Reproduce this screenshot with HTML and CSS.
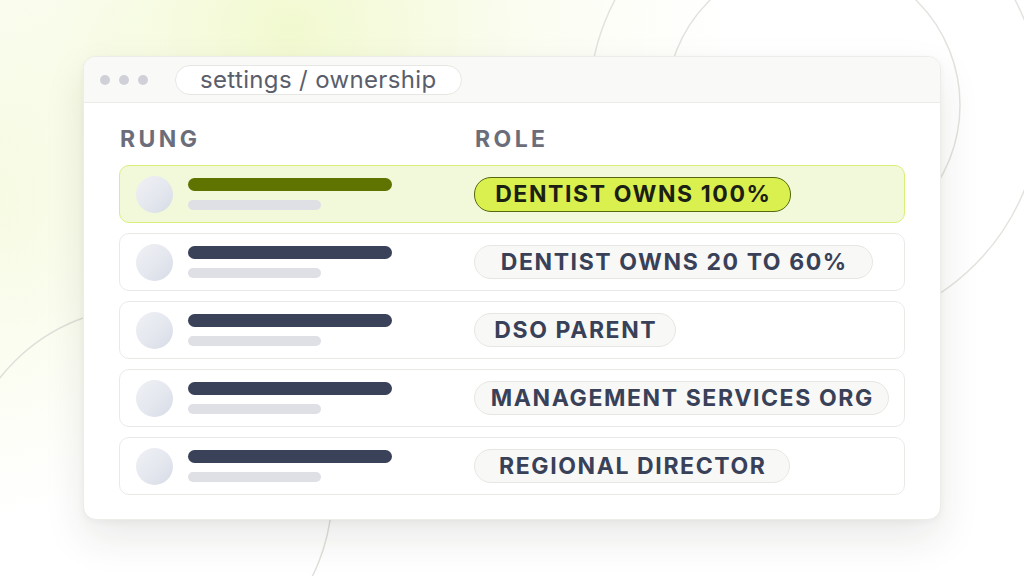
FILE: index.html
```html
<!DOCTYPE html>
<html lang="en">
<head>
<meta charset="utf-8">
<title>settings / ownership</title>
<link rel="stylesheet" href="styles.css">
</head>
<body>
<div class="stage">
  <svg class="deco" width="1024" height="576" viewBox="0 0 1024 576" aria-hidden="true">
    <circle cx="813" cy="105" r="147" fill="none" stroke="#e3e3de" stroke-width="1.5"/>
    <circle cx="815" cy="105" r="226" fill="none" stroke="#e3e3de" stroke-width="1.5"/>
    <circle cx="146" cy="493" r="186" fill="none" stroke="#e0e0da" stroke-width="1.5"/>
  </svg>
  <div class="window">
    <div class="titlebar">
      <div class="dots"><span class="dot"></span><span class="dot"></span><span class="dot"></span></div>
      <div class="address">settings / ownership</div>
    </div>
    <div class="content">
      <div class="head">
        <div class="col-label">RUNG</div>
        <div class="col-label">ROLE</div>
      </div>
      <div class="rows">
        <div class="row row-active">
          <div class="rung"><span class="avatar"></span><span class="lines"><span class="line-main"></span><span class="line-sub"></span></span></div>
          <div class="role"><span class="pill pill-active p1">DENTIST OWNS 100%</span></div>
        </div>
        <div class="row">
          <div class="rung"><span class="avatar"></span><span class="lines"><span class="line-main"></span><span class="line-sub"></span></span></div>
          <div class="role"><span class="pill p2">DENTIST OWNS 20 TO 60%</span></div>
        </div>
        <div class="row">
          <div class="rung"><span class="avatar"></span><span class="lines"><span class="line-main"></span><span class="line-sub"></span></span></div>
          <div class="role"><span class="pill p3">DSO PARENT</span></div>
        </div>
        <div class="row">
          <div class="rung"><span class="avatar"></span><span class="lines"><span class="line-main"></span><span class="line-sub"></span></span></div>
          <div class="role"><span class="pill p4">MANAGEMENT SERVICES ORG</span></div>
        </div>
        <div class="row">
          <div class="rung"><span class="avatar"></span><span class="lines"><span class="line-main"></span><span class="line-sub"></span></span></div>
          <div class="role"><span class="pill p5">REGIONAL DIRECTOR</span></div>
        </div>
      </div>
    </div>
  </div>
</div>
</body>
</html>
```

FILE: styles.css
```css
* { box-sizing: border-box; }
html, body { margin: 0; padding: 0; }
body {
  width: 1024px;
  height: 576px;
  overflow: hidden;
  font-family: Inter, "Liberation Sans", sans-serif;
  background: #ffffff;
}
.stage {
  position: relative;
  width: 1024px;
  height: 576px;
  padding: 56px 0 0 83px;
  background:
    radial-gradient(ellipse 440px 380px at 290px 30px, rgba(238, 248, 196, 0.8), rgba(245, 250, 222, 0.4) 55%, rgba(255, 255, 255, 0) 100%),
    radial-gradient(ellipse 200px 320px at 0px 200px, rgba(242, 249, 210, 0.6), rgba(255, 255, 255, 0) 100%),
    #ffffff;
}
.deco {
  position: absolute;
  left: 0;
  top: 0;
  z-index: 0;
}
.window {
  position: relative;
  z-index: 1;
  width: 858px;
  height: 464px;
  background: #ffffff;
  border: 1px solid #ecece8;
  border-radius: 13px;
  overflow: hidden;
  box-shadow: 0 18px 40px rgba(30, 35, 20, 0.10), 0 2px 6px rgba(30, 35, 20, 0.04);
}
.titlebar {
  height: 46px;
  background: #f9f9f7;
  border-bottom: 1px solid #ebebe7;
  display: flex;
  align-items: center;
  padding-left: 16px;
}
.dots { display: flex; gap: 9px; }
.dot {
  width: 10px;
  height: 10px;
  border-radius: 50%;
  background: #d0d1d8;
}
.address {
  margin-left: 27px;
  height: 30px;
  width: 287px;
  border: 1px solid #e6e6e2;
  border-radius: 15px;
  background: #ffffff;
  padding-left: 24px;
  font-size: 24px;
  line-height: 27px;
  color: #5a5e6b;
  letter-spacing: 0.35px;
  white-space: nowrap;
}
.content {
  padding: 23px 35px 0 35px;
}
.head {
  display: grid;
  grid-template-columns: 355px 1fr;
  padding-left: 1px;
  height: 39px;
  align-items: start;
}
.col-label {
  font-size: 23px;
  font-weight: 700;
  letter-spacing: 3.4px;
  color: #6b6e7a;
  line-height: 26px;
}
.rows {
  display: flex;
  flex-direction: column;
  gap: 10px;
}
.row {
  height: 58px;
  border: 1px solid #e9e9e6;
  border-radius: 10px;
  background: #ffffff;
  display: grid;
  grid-template-columns: 338px 1fr;
  align-items: center;
  padding-left: 16px;
}
.row-active {
  background: #f2f8da;
  border-color: #d8ef7c;
}
.rung { display: flex; align-items: center; }
.avatar {
  width: 37px;
  height: 37px;
  border-radius: 50%;
  background: linear-gradient(135deg, #eff1f5 0%, #e4e7ee 55%, #d6dbe5 100%);
}
.lines {
  display: flex;
  flex-direction: column;
  gap: 9px;
  margin-left: 15px;
}
.line-main {
  width: 204px;
  height: 13px;
  border-radius: 7px;
  background: #3a4259;
}
.row-active .line-main { background: #5f7300; }
.line-sub {
  width: 133px;
  height: 10px;
  border-radius: 5px;
  background: #dfe0e5;
}
.role { display: flex; align-items: center; }
.pill {
  display: inline-flex;
  align-items: center;
  justify-content: center;
  height: 34px;
  border-radius: 17px;
  border: 1px solid #e6e6e2;
  background: #f8f8f6;
  color: #394159;
  font-size: 23px;
  font-weight: 700;
  letter-spacing: 1.6px;
  padding: 0 0 0 1.6px;
  white-space: nowrap;
}
.pill-active {
  background: #d9f04f;
  border-color: #55680f;
  color: #1b2013;
  height: 35px;
}
.p1 { width: 317px; }
.p2 { width: 399px; }
.p3 { width: 202px; }
.p4 { width: 415px; }
.p5 { width: 316px; }
```
